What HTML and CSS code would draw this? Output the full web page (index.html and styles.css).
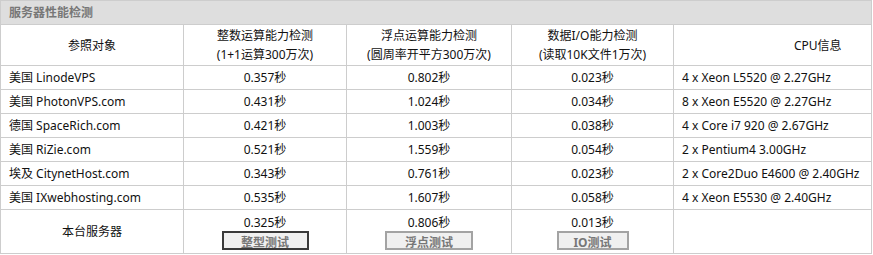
FILE: index.html
```html
<!DOCTYPE html>
<html>
<head>
<meta charset="utf-8">
<link rel="stylesheet" href="styles.css">
</head>
<body>
<table class="bench">
  <colgroup>
    <col class="c1"><col class="c2"><col class="c3"><col class="c4"><col class="c5">
  </colgroup>
  <tr class="title"><th colspan="5">服务器性能检测</th></tr>
  <tr class="head">
    <td class="ctr">参照对象</td>
    <td class="ctr">整数运算能力检测<br>(1+1运算300万次)</td>
    <td class="ctr">浮点运算能力检测<br>(圆周率开平方300万次)</td>
    <td class="ctr">数据I/O能力检测<br>(读取10K文件1万次)</td>
    <td class="cpuh">CPU信息</td>
  </tr>
  <tr class="row"><td>美国 LinodeVPS</td><td class="ctr">0.357秒</td><td class="ctr">0.802秒</td><td class="ctr">0.023秒</td><td>4 x Xeon L5520 @ 2.27GHz</td></tr>
  <tr class="row"><td>美国 PhotonVPS.com</td><td class="ctr">0.431秒</td><td class="ctr">1.024秒</td><td class="ctr">0.034秒</td><td>8 x Xeon E5520 @ 2.27GHz</td></tr>
  <tr class="row"><td>德国 SpaceRich.com</td><td class="ctr">0.421秒</td><td class="ctr">1.003秒</td><td class="ctr">0.038秒</td><td>4 x Core i7 920 @ 2.67GHz</td></tr>
  <tr class="row"><td>美国 RiZie.com</td><td class="ctr">0.521秒</td><td class="ctr">1.559秒</td><td class="ctr">0.054秒</td><td>2 x Pentium4 3.00GHz</td></tr>
  <tr class="row"><td>埃及 CitynetHost.com</td><td class="ctr">0.343秒</td><td class="ctr">0.761秒</td><td class="ctr">0.023秒</td><td>2 x Core2Duo E4600 @ 2.40GHz</td></tr>
  <tr class="row"><td>美国 IXwebhosting.com</td><td class="ctr">0.535秒</td><td class="ctr">1.607秒</td><td class="ctr">0.058秒</td><td>4 x Xeon E5530 @ 2.40GHz</td></tr>
  <tr class="local">
    <td class="ctr">本台服务器</td>
    <td class="ctr"><div class="val">0.325秒</div><button class="btn btn-int focus">整型测试</button></td>
    <td class="ctr"><div class="val">0.806秒</div><button class="btn btn-float">浮点测试</button></td>
    <td class="ctr"><div class="val">0.013秒</div><button class="btn btn-io">IO测试</button></td>
    <td></td>
  </tr>
</table>
</body>
</html>
```
FILE: styles.css
```css
html, body {
  margin: 0;
  padding: 0;
  background: #fff;
}
body {
  font-family: "Noto Sans", "Noto Sans CJK SC", sans-serif;
  font-size: 12px;
  color: #111;
}
.bench {
  border-collapse: collapse;
  table-layout: fixed;
  width: 871px;
}
.c1 { width: 183px; }
.c2 { width: 163px; }
.c3 { width: 165px; }
.c4 { width: 162px; }
.c5 { width: 198px; }
.bench td, .bench th {
  border: 1px solid #cdcdcd;
  padding: 0 0 0 8px;
  line-height: 18px;
  white-space: nowrap;
  overflow: hidden;
}
.bench .ctr {
  text-align: center;
  padding: 0;
}
.title th {
  background: #dedede;
  color: #777;
  font-weight: bold;
  text-align: left;
  height: 23px;
  padding-left: 8px;
}
.head td {
  height: 40px;
  line-height: 19px;
}
.bench .cpuh {
  padding-left: 120px;
}
.row td {
  height: 23px;
}
.local td {
  height: 43px;
}
.val {
  line-height: 17px;
  margin-top: 4px;
}
.btn {
  display: inline-block;
  box-sizing: border-box;
  height: 19px;
  padding: 3px 0 0;
  margin: 0 0 3px;
  background: #f0f0f0;
  border: 2px solid #a3a3a3;
  font-family: "Noto Sans", "Noto Sans CJK SC", sans-serif;
  font-size: 12px;
  font-weight: bold;
  color: #777;
  line-height: 14px;
  overflow: hidden;
  vertical-align: top;
}
.btn.focus {
  border-color: #3a3a3a;
}
.btn-int { width: 87px; }
.btn-float { width: 88px; }
.btn-io { width: 72px; }
```
